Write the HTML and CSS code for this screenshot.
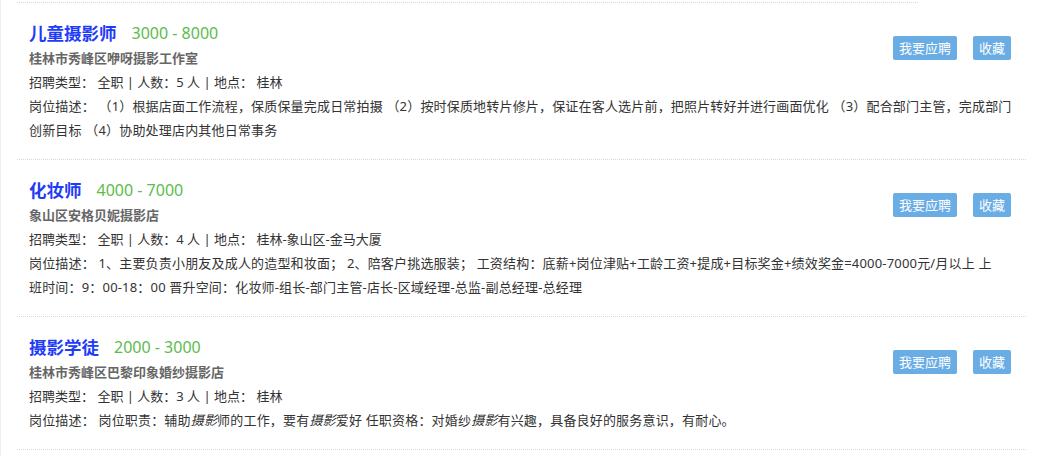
FILE: index.html
```html
<!DOCTYPE html>
<html lang="zh-CN">
<head>
    <meta charset="UTF-8">
    <meta name="viewport" content="width=device-width, initial-scale=1.0">
    <title>招聘信息</title>
    <link rel="stylesheet" href="styles.css">
</head>
<body>
    <div class="job-list">
        <div class="list-top"></div>

        <div class="job-item">
            <div class="job-head">
                <div class="job-info">
                    <div class="job-title"><a href="#">儿童摄影师</a><span class="salary">3000 - 8000</span></div>
                    <div class="company">桂林市秀峰区咿呀摄影工作室</div>
                    <div class="meta">招聘类型： 全职 | 人数：5 人 | 地点： 桂林</div>
                </div>
                <div class="actions">
                    <button class="btn">我要应聘</button>
                    <button class="btn">收藏</button>
                </div>
            </div>
            <div class="desc">岗位描述： （1）根据店面工作流程，保质保量完成日常拍摄 （2）按时保质地转片修片，保证在客人选片前，把照片转好并进行画面优化 （3）配合部门主管，完成部门创新目标 （4）协助处理店内其他日常事务</div>
        </div>

        <div class="job-item">
            <div class="job-head">
                <div class="job-info">
                    <div class="job-title"><a href="#">化妆师</a><span class="salary">4000 - 7000</span></div>
                    <div class="company">象山区安格贝妮摄影店</div>
                    <div class="meta">招聘类型： 全职 | 人数：4 人 | 地点： 桂林-象山区-金马大厦</div>
                </div>
                <div class="actions">
                    <button class="btn">我要应聘</button>
                    <button class="btn">收藏</button>
                </div>
            </div>
            <div class="desc">岗位描述： 1、主要负责小朋友及成人的造型和妆面； 2、陪客户挑选服装； 工资结构：底薪+岗位津贴+工龄工资+提成+目标奖金+绩效奖金=4000-7000元/月以上 上<br>班时间：9：00-18：00 晋升空间：化妆师-组长-部门主管-店长-区域经理-总监-副总经理-总经理</div>
        </div>

        <div class="job-item">
            <div class="job-head">
                <div class="job-info">
                    <div class="job-title"><a href="#">摄影学徒</a><span class="salary">2000 - 3000</span></div>
                    <div class="company">桂林市秀峰区巴黎印象婚纱摄影店</div>
                    <div class="meta">招聘类型： 全职 | 人数：3 人 | 地点： 桂林</div>
                </div>
                <div class="actions">
                    <button class="btn">我要应聘</button>
                    <button class="btn">收藏</button>
                </div>
            </div>
            <div class="desc">岗位描述： 岗位职责：辅助<em>摄影</em>师的工作，要有<em>摄影</em>爱好 任职资格：对婚纱<em>摄影</em>有兴趣，具备良好的服务意识，有耐心。</div>
        </div>
    </div>
</body>
</html>
```

FILE: styles.css
```css
body {
    margin: 0;
    background-color: #fff;
    font-family: "Noto Sans", "Noto Sans CJK SC", sans-serif;
    font-size: 13px;
    color: #333;
}

.job-list {
    border-left: 1px solid #eee;
    min-height: 456px;
    box-sizing: border-box;
    padding-top: 2px;
}

.list-top {
    margin-left: 16px;
    width: 901px;
    border-top: 1px dotted #d8d8d8;
}

.job-item {
    margin-left: 16px;
    width: 1009px;
    box-sizing: border-box;
    padding: 17px 12px;
    border-bottom: 1px dotted #d8d8d8;
}

.job-head {
    display: flex;
    justify-content: space-between;
    align-items: flex-start;
}

.job-title {
    height: 26px;
    line-height: 26px;
    display: flex;
    align-items: center;
}

.job-title a {
    font-size: 17.5px;
    font-weight: bold;
    color: #1f3cf6;
    text-decoration: none;
}

.salary {
    margin-left: 15px;
    font-size: 16px;
    color: #5cbc4c;
}

.company {
    line-height: 24px;
    font-weight: bold;
    color: #666;
}

.meta {
    line-height: 24px;
}

.actions {
    display: flex;
    gap: 16px;
    margin-top: 16px;
    margin-right: 3px;
}

.btn {
    height: 24px;
    padding: 0 6px;
    border: none;
    border-radius: 2px;
    background-color: #6aade5;
    color: #fff;
    font-family: inherit;
    font-size: 13px;
    line-height: 24px;
    cursor: pointer;
}

.desc {
    line-height: 24px;
    letter-spacing: 0.18px;
}

.desc em {
    font-style: italic;
}
```
